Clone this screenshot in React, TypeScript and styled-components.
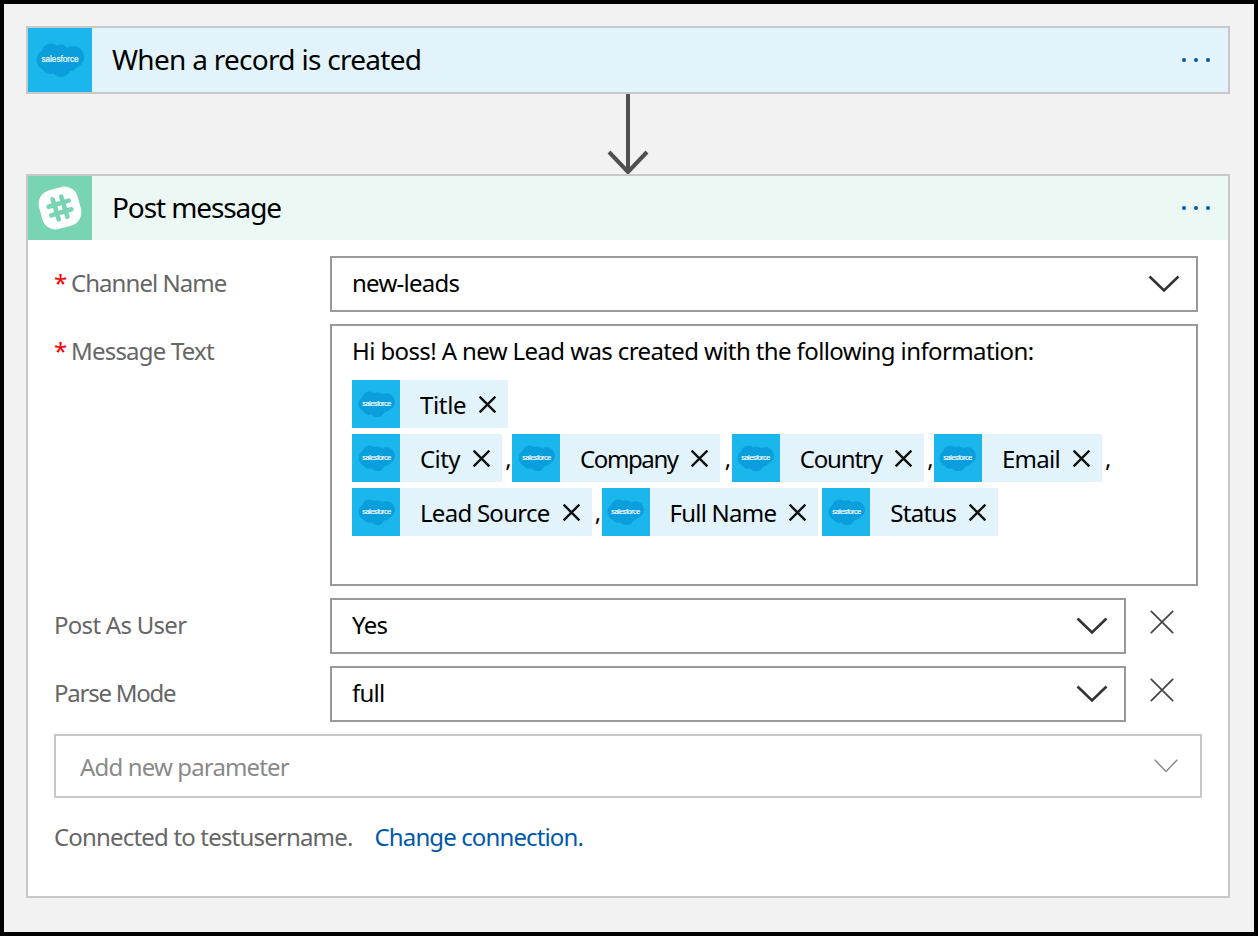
import React from "react";
import styled, { createGlobalStyle } from "styled-components";

const Global = createGlobalStyle`
  html, body { margin: 0; padding: 0; }
  body { font-family: "Noto Sans", "Open Sans", sans-serif; color: #000; }
  * { box-sizing: border-box; }
`;

const Page = styled.div`
  width: 1258px;
  height: 936px;
  border: 4px solid #000;
  background: #f2f2f2;
  padding: 22px 24px 0 22px;
  overflow: hidden;
`;
const Card = styled.section`
  width: 1204px;
  border: 2px solid #c8c8c8;
  background: #fff;
`;
const Header = styled.header<{ $bg: string }>`
  display: flex;
  align-items: center;
  height: 64px;
  background: ${(p) => p.$bg};
  padding-right: 18px;
`;
const IconTile = styled.div<{ $bg: string; $size: number }>`
  flex: none;
  width: ${(p) => p.$size}px;
  height: ${(p) => p.$size}px;
  background: ${(p) => p.$bg};
  display: flex;
  align-items: center;
  justify-content: center;
`;
const Title = styled.h2<{ $ls: number }>`
  flex: 1;
  margin: 0 0 2px 20px;
  font-size: 28px;
  font-weight: 400;
  line-height: 36px;
  letter-spacing: ${(p) => p.$ls}px;
`;
const Dots = styled.div`
  display: flex;
  gap: 8px;
`;
const Dot = styled.span`
  width: 4px;
  height: 4px;
  border-radius: 50%;
  background: #0058ad;
`;
const Connector = styled.div`
  height: 80px;
  width: 1204px;
  display: flex;
  justify-content: center;
`;
const Form = styled.div`
  height: 656px;
  padding: 16px 26px 0;
  display: flex;
  flex-direction: column;
  gap: 12px;
`;
const Row = styled.div`
  display: flex;
  align-items: flex-start;
`;
const Label = styled.label<{ $ls: number }>`
  flex: none;
  width: 276px;
  height: 56px;
  padding-bottom: 2px;
  display: flex;
  align-items: center;
  color: #666;
  font-size: 24px;
  letter-spacing: ${(p) => p.$ls}px;
  line-height: 32px;
`;
const Star = styled.span`
  color: #f00;
  width: 17px;
  flex: none;
`;
const Select = styled.div<{ $w: number }>`
  width: ${(p) => p.$w}px;
  height: 56px;
  border: 2px solid #999;
  padding: 0 16px 0 20px;
  display: flex;
  align-items: center;
  justify-content: space-between;
  font-size: 24px;
  letter-spacing: -0.75px;
`;
const SelectValue = styled.span`
  margin-bottom: 4px;
`;
const Remove = styled.button`
  border: 0;
  background: none;
  padding: 0;
  margin: 12px 0 0 24px;
  width: 24px;
  height: 24px;
  display: flex;
`;
const Message = styled.div`
  width: 868px;
  height: 262px;
  border: 2px solid #999;
  padding: 8px 20px;
  font-size: 24px;
  letter-spacing: -0.61px;
`;
const MessageLine = styled.div`
  height: 36px;
  line-height: 34px;
  margin-bottom: 10px;
`;
const TokenRow = styled.div`
  display: flex;
  align-items: flex-end;
  height: 48px;
  margin-bottom: 6px;
`;
const Token = styled.span`
  display: flex;
  align-items: center;
  height: 48px;
  background: #e2f3fb;
  padding-right: 12px;
`;
const TokenText = styled.span<{ $ls: number }>`
  margin-left: 20px;
  margin-right: 13px;
  white-space: nowrap;
  letter-spacing: ${(p) => p.$ls}px;
`;
const Comma = styled.span<{ $w?: number }>`
  width: ${(p) => p.$w ?? 10}px;
  flex: none;
  line-height: 48px;
  height: 48px;
  text-align: right;
  padding-right: 1px;
`;
const AddParam = styled.div`
  width: 1148px;
  height: 64px;
  border: 2px solid #c8c8c8;
  padding: 0 22px 0 24px;
  display: flex;
  align-items: center;
  justify-content: space-between;
  color: #8a8a8a;
  font-size: 24px;
  letter-spacing: -0.85px;
`;
const AddLabel = styled.span`
  margin-top: 1px;
`;
const Footer = styled.div`
  margin-top: 11px;
  color: #666;
  font-size: 24px;
  line-height: 32px;
  display: flex;
  gap: 22px;
`;
const FooterText = styled.span`
  letter-spacing: -0.82px;
`;
const Link = styled.a`
  color: #0058ad;
  letter-spacing: -0.88px;
`;

const Cloud = ({ width }: { width: number }) => (
  <svg width={width} height={(width * 34) / 48} viewBox="0 0 48 34" aria-hidden="true">
    <g fill="#0a9fdc">
      <circle cx="11" cy="17" r="10.5" />
      <circle cx="15" cy="10" r="9.5" />
      <circle cx="25" cy="9" r="7.5" />
      <circle cx="37" cy="14" r="11" />
      <circle cx="25" cy="24" r="10" />
      <circle cx="34" cy="20" r="8" />
      <circle cx="14" cy="23" r="8" />
    </g>
    <text x="24" y="19" textAnchor="middle" fill="#fff" stroke="#fff" strokeWidth="0.2" fontSize="9.5" fontFamily="Liberation Sans, sans-serif" textLength="37" lengthAdjust="spacingAndGlyphs">
      salesforce
    </text>
  </svg>
);

const Slack = () => (
  <svg width="50" height="50" viewBox="0 0 50 50" aria-hidden="true">
    <rect x="5" y="5" width="40" height="40" rx="14" fill="#fff" transform="rotate(-15 25 25)" />
    <g stroke="#79d4b4" strokeWidth="4.6" strokeLinecap="round" transform="rotate(-17 25 25)">
      <path d="M20.5 14.5v21M29.5 14.5v21M14.5 20.5h21M14.5 29.5h21" />
    </g>
  </svg>
);

const Chevron = ({ light }: { light?: boolean }) =>
  light ? (
    <svg width="24" height="14" viewBox="0 0 24 14" aria-hidden="true">
      <path d="M.7.7 12 12.4 23.3.7" fill="none" stroke="#8a8a8a" strokeWidth="1.5" />
    </svg>
  ) : (
    <svg width="32" height="18" viewBox="0 0 32 18" aria-hidden="true">
      <path d="M1.5 1.5 16 15.5 30.5 1.5" fill="none" stroke="#333" strokeWidth="2.6" />
    </svg>
  );

const Cross = ({ size = 24, weight = 1.7, color = "#444" }: { size?: number; weight?: number; color?: string }) => (
  <svg width={size} height={size} viewBox="0 0 24 24" aria-hidden="true">
    <path d="M.8.8 23.2 23.2M23.2.8.8 23.2" fill="none" stroke={color} strokeWidth={weight} />
  </svg>
);

const Arrow = () => (
  <svg width="44" height="80" viewBox="0 0 44 80" aria-hidden="true">
    <path d="M22 0V78M3 58l19 20 19-20" fill="none" stroke="#505050" strokeWidth="4" />
  </svg>
);

const Tok = ({ label, ls }: { label: string; ls: number }) => (
  <Token>
    <IconTile $bg="#1bb7ec" $size={48}>
      <Cloud width={37} />
    </IconTile>
    <TokenText $ls={ls}>{label}</TokenText>
    <Cross size={17} weight={3.4} color="#111" />
  </Token>
);

export default function App() {
  return (
    <Page>
      <Global />
      <Card>
        <Header $bg="#e2f3fb">
          <IconTile $bg="#1bb7ec" $size={64}>
            <Cloud width={48} />
          </IconTile>
          <Title $ls={-0.71}>When a record is created</Title>
          <Dots>
            <Dot />
            <Dot />
            <Dot />
          </Dots>
        </Header>
      </Card>
      <Connector>
        <Arrow />
      </Connector>
      <Card>
        <Header $bg="#ebf8f3">
          <IconTile $bg="#79d4b4" $size={64}>
            <Slack />
          </IconTile>
          <Title $ls={-1.1}>Post message</Title>
          <Dots>
            <Dot />
            <Dot />
            <Dot />
          </Dots>
        </Header>
        <Form>
          <Row>
            <Label $ls={-0.95}>
              <Star>*</Star>Channel Name
            </Label>
            <Select $w={868}>
              <SelectValue>new-leads</SelectValue>
              <Chevron />
            </Select>
          </Row>
          <Row>
            <Label $ls={-0.8}>
              <Star>*</Star>Message Text
            </Label>
            <Message>
              <MessageLine>Hi boss! A new Lead was created with the following information:</MessageLine>
              <TokenRow>
                <Tok label="Title" ls={-0.35} />
              </TokenRow>
              <TokenRow>
                <Tok label="City" ls={-0.55} />
                <Comma>,</Comma>
                <Tok label="Company" ls={-1.41} />
                <Comma $w={12}>,</Comma>
                <Tok label="Country" ls={-1.12} />
                <Comma>,</Comma>
                <Tok label="Email" ls={-0.75} />
                <Comma>,</Comma>
              </TokenRow>
              <TokenRow>
                <Tok label="Lead Source" ls={-0.73} />
                <Comma>,</Comma>
                <Tok label="Full Name" ls={-0.77} />
                <Comma $w={4} />
                <Tok label="Status" ls={-0.72} />
              </TokenRow>
            </Message>
          </Row>
          <Row>
            <Label $ls={-0.72}>Post As User</Label>
            <Select $w={796}>
              <SelectValue>Yes</SelectValue>
              <Chevron />
            </Select>
            <Remove aria-label="Remove">
              <Cross />
            </Remove>
          </Row>
          <Row>
            <Label $ls={-1.25}>Parse Mode</Label>
            <Select $w={796}>
              <SelectValue>full</SelectValue>
              <Chevron />
            </Select>
            <Remove aria-label="Remove">
              <Cross />
            </Remove>
          </Row>
          <AddParam>
            <AddLabel>Add new parameter</AddLabel>
            <Chevron light />
          </AddParam>
          <Footer>
            <FooterText>Connected to testusername.</FooterText>
            <Link>Change connection.</Link>
          </Footer>
        </Form>
      </Card>
    </Page>
  );
}
